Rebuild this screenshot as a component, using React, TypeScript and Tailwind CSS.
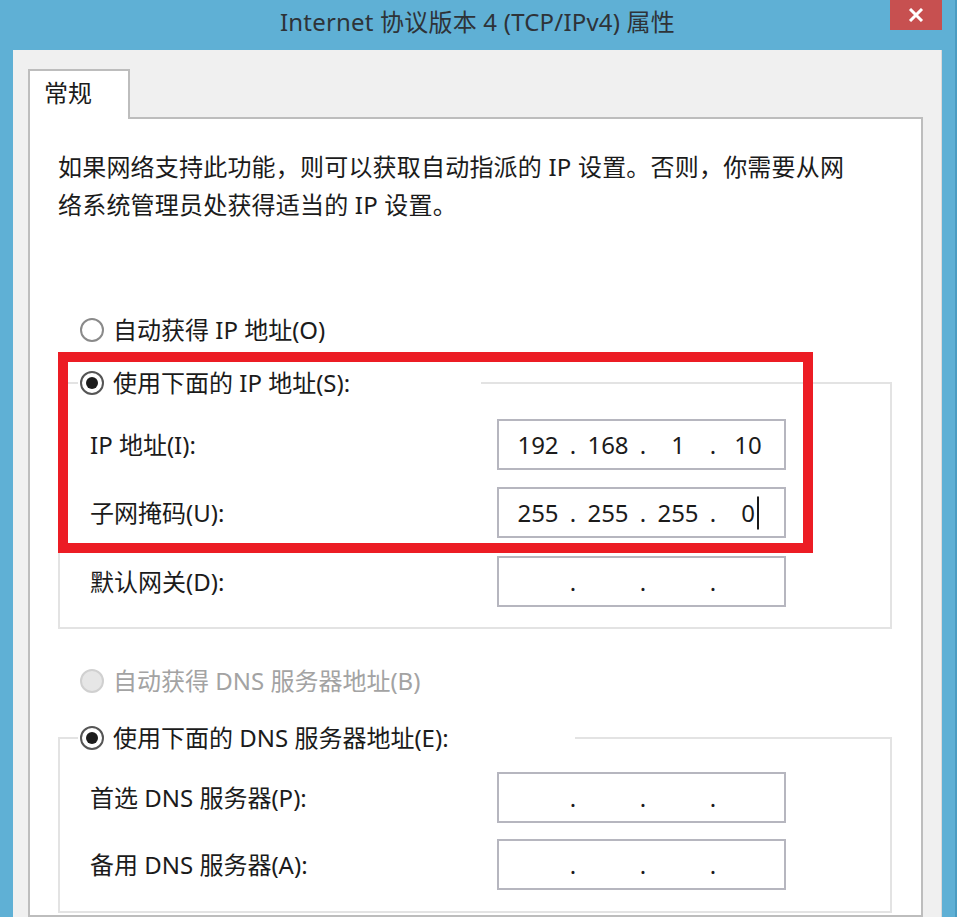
import React from 'react'

const FONT = "font-['Noto_Sans','Noto_Sans_CJK_SC',sans-serif]"

function Radio({ checked = false, disabled = false }: { checked?: boolean; disabled?: boolean }) {
    if (disabled) {
        return <span className="w-[24px] h-[24px] shrink-0 rounded-full border-2 border-[#d0d0d0] bg-[#e6e6e6]" />
    }
    return (
        <span
            className={`w-[24px] h-[24px] shrink-0 rounded-full border-2 bg-white flex items-center justify-center ${checked ? 'border-[#555555]' : 'border-[#8a8a8a]'}`}
        >
            {checked && <span className="w-[12px] h-[12px] rounded-full bg-[#1c1c1c]" />}
        </span>
    )
}

// four octet cells with dots in between, like the win32 IP control
function IpField({ parts, caret = false }: { parts: string[]; caret?: boolean }) {
    return (
        <div className="w-[289px] h-[51px] shrink-0 border-2 border-[#b6b6bf] bg-white flex items-center pl-[6px] text-[24px] text-[#1b1b1b]">
            {parts.map((p, i) => (
                <React.Fragment key={i}>
                    {i > 0 && <span className="w-[4px] flex justify-center">.</span>}
                    <span className="w-[66px] flex justify-center">
                        {caret && i === 3 ? (
                            <span className="relative">
                                {p}
                                <span className="absolute left-full top-1/2 -translate-y-1/2 ml-[2px] w-[2px] h-[33px] bg-[#1a1a1a]" />
                            </span>
                        ) : (
                            p
                        )}
                    </span>
                </React.Fragment>
            ))}
        </div>
    )
}

function FieldRow({ label, parts, caret, className = '' }: { label: string; parts: string[]; caret?: boolean; className?: string }) {
    return (
        <div className={`flex items-center h-[51px] ${className}`}>
            <span className="w-[407px] shrink-0">{label}</span>
            <IpField parts={parts} caret={caret} />
        </div>
    )
}

const EMPTY = ['', '', '', '']

export default function App() {
    return (
        <div className={`relative w-[957px] h-[917px] overflow-hidden bg-[#5fb0d5] border-r-2 border-[#4b9cc2] flex flex-col ${FONT} text-[#1b1b1b]`}>
            {/* Title bar */}
            <div className="h-[50px] shrink-0 flex items-center justify-center pb-[6px] text-[24px] tracking-[0.2px] text-[#2e3338]">
                Internet 协议版本 4 (TCP/IPv4) 属性
            </div>
            <button className="absolute top-0 right-[13px] w-[52px] h-[30px] bg-[#c75050] flex items-center justify-center">
                <svg width="16" height="14" viewBox="0 0 16 14">
                    <path d="M2 1 L14 13 M14 1 L2 13" stroke="white" strokeWidth="3" />
                </svg>
            </button>

            {/* Window body */}
            <div className="flex-1 ml-[13px] mr-[13px] bg-[#f0f0f0] border-r border-[#d9d9d9] pl-[15px] pr-[18px] pt-[19px] flex flex-col">
                {/* Tab */}
                <div className="relative z-10 w-[102px] h-[50px] -mb-[2px] border-2 border-b-0 border-[#bdbdbd] bg-white flex items-center pl-[14px] pb-[4px] text-[24px]">
                    常规
                </div>

                {/* Panel */}
                <div className="flex-1 border-2 border-[#bdbdbd] bg-white pl-[28px] pt-[29px] text-[24px]">
                    <p className="leading-[38px] whitespace-nowrap tracking-[0.2px]">
                        如果网络支持此功能，则可以获取自动指派的 IP 设置。否则，你需要从网
                        <br />
                        络系统管理员处获得适当的 IP 设置。
                    </p>

                    <div className="mt-[87px] h-[38px] flex items-center gap-[9px] pl-[22px]">
                        <Radio />
                        <span>自动获得 IP 地址(O)</span>
                    </div>

                    <fieldset className="mt-[15px] w-[834px] border-2 border-[#e3e3e3] pl-[30px] pb-[20px]">
                        <legend className="-ml-[12px] w-[403px] h-[38px] bg-white">
                            <div className="h-[38px] flex items-center gap-[9px] pl-[2px]">
                                <Radio checked />
                                <span>使用下面的 IP 地址(S):</span>
                            </div>
                        </legend>
                        <FieldRow className="mt-[17px]" label="IP 地址(I):" parts={['192', '168', '1', '10']} />
                        <FieldRow className="mt-[17px]" label="子网掩码(U):" parts={['255', '255', '255', '0']} caret />
                        <FieldRow className="mt-[18px]" label="默认网关(D):" parts={EMPTY} />
                    </fieldset>

                    <div className="mt-[33px] h-[38px] flex items-center gap-[9px] pl-[22px] text-[#a3a3a3]">
                        <Radio disabled />
                        <span>自动获得 DNS 服务器地址(B)</span>
                    </div>

                    <fieldset className="mt-[19px] w-[834px] border-2 border-[#e3e3e3] pl-[30px] pb-[21px]">
                        <legend className="-ml-[12px] w-[497px] h-[38px] bg-white">
                            <div className="h-[38px] flex items-center gap-[9px] pl-[2px]">
                                <Radio checked />
                                <span>使用下面的 DNS 服务器地址(E):</span>
                            </div>
                        </legend>
                        <FieldRow className="mt-[15px]" label="首选 DNS 服务器(P):" parts={EMPTY} />
                        <FieldRow className="mt-[16px]" label="备用 DNS 服务器(A):" parts={EMPTY} />
                    </fieldset>
                </div>
            </div>

            {/* Red annotation box */}
            <div className="absolute left-[58px] top-[352px] w-[755px] h-[201px] border-[10px] border-[#ec1c24] pointer-events-none" />
        </div>
    )
}
